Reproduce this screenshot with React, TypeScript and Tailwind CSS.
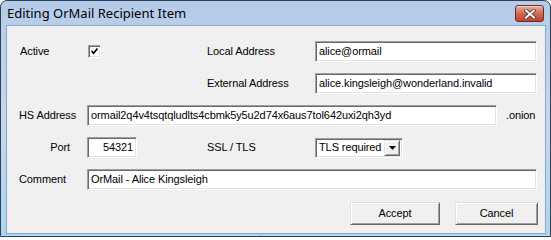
import React from 'react';

const sunken =
  'bg-white border border-t-[#a0a0a0] border-l-[#a0a0a0] border-b-white border-r-white shadow-[inset_1px_1px_0_#696969,inset_-1px_-1px_0_#e3e3e3]';
const raised =
  'bg-[#f0f0f0] border border-t-[#e3e3e3] border-l-[#e3e3e3] border-b-[#696969] border-r-[#696969] shadow-[inset_1px_1px_0_#ffffff,inset_-1px_-1px_0_#a0a0a0]';

const Field: React.FC<{ value: string; className?: string; right?: boolean }> = ({ value, className = '', right }) => (
  <div
    className={`${sunken} h-[21px] flex items-center px-[3px] overflow-hidden whitespace-nowrap ${
      right ? 'justify-end' : ''
    } ${className}`}
  >
    {value}
  </div>
);

const CloseButton = () => (
  <div className="w-[29px] h-[17px] rounded-[3px] border border-[#6e2b22] bg-gradient-to-b from-[#e8ad9f] via-[#d06a55] to-[#b9432f] shadow-[inset_0_1px_0_#f3cfc6] flex items-center justify-center">
    <svg width="12" height="10" viewBox="0 0 12 10">
      <path d="M2 1.5 L10 8.5 M10 1.5 L2 8.5" stroke="#5a2a24" strokeWidth="3.6" strokeLinecap="square" />
      <path d="M2 1.5 L10 8.5 M10 1.5 L2 8.5" stroke="#ffffff" strokeWidth="2" strokeLinecap="square" />
    </svg>
  </div>
);

const Checkbox = () => (
  <div className={`${sunken} w-[13px] h-[13px] flex items-center justify-center`}>
    <svg width="9" height="9" viewBox="0 0 9 9">
      <path d="M1.5 4 L3.5 6.2 L7.5 1.5" stroke="#000" strokeWidth="1.7" fill="none" />
    </svg>
  </div>
);

const Select = () => (
  <div className={`${sunken} w-[88px] h-[20px] flex items-center pl-[3px] pr-[2px]`}>
    <span className="flex-1">TLS required</span>
    <div className={`${raised} w-[16px] h-[16px] flex items-center justify-center`}>
      <svg width="7" height="4" viewBox="0 0 7 4">
        <path d="M0 0 H7 L3.5 4 Z" fill="#000" />
      </svg>
    </div>
  </div>
);

const Button: React.FC<{ label: string; className?: string }> = ({ label, className = '' }) => (
  <div className={`${raised} h-[23px] flex items-center justify-center ${className}`}>{label}</div>
);

export default function App() {
  return (
    <div className="w-[551px] h-[237px] flex flex-col border border-[#2e3f57] rounded-t-[7px] bg-gradient-to-b from-[#b4cce9] via-[#c4d8ef] to-[#a9d6f0] overflow-hidden">
      <div className="h-[24px] flex justify-between pl-[6px] pr-[6px]">
        <span className="pt-[4px] text-[13px] text-black font-['Noto_Sans',sans-serif] leading-[17px]">
          Editing OrMail Recipient Item
        </span>
        <div className="pt-[4px]">
          <CloseButton />
        </div>
      </div>
      <div className="ml-[5px] mr-[4px] h-[209px] border border-[#8da5c1] bg-[#f0f0f0] pl-[12px] pt-[15px] font-['Liberation_Sans',Arial,sans-serif] text-[11px] tracking-[-0.1px] text-black">
        <div className="grid grid-cols-[68px_120px_108px_222px] auto-rows-[21px] gap-y-[11px] items-center">
          <span className="pl-px">Active</span>
          <div className="pl-px">
            <Checkbox />
          </div>
          <span>Local Address</span>
          <Field value="alice@ormail" />

          <span className="col-start-3">External Address</span>
          <Field value="alice.kingsleigh@wonderland.invalid" />

          <span>HS Address</span>
          <div className="col-span-3 flex items-center">
            <Field value="ormail2q4v4tsqtqludlts4cbmk5y5u2d74x6aus7tol642uxi2qh3yd" className="w-[410px]" />
            <span className="ml-[9px]">.onion</span>
          </div>

          <span className="text-right pr-[17px]">Port</span>
          <div>
            <Field value="54321" right className="w-[50px]" />
          </div>
          <span>SSL / TLS</span>
          <Select />

          <span>Comment</span>
          <Field value="OrMail - Alice Kingsleigh" className="col-span-3" />
        </div>
        <div className="flex justify-end gap-[15px] mt-[12px] pr-[7px]">
          <Button label="Accept" className="w-[90px]" />
          <Button label="Cancel" className="w-[83px]" />
        </div>
      </div>
    </div>
  );
}
